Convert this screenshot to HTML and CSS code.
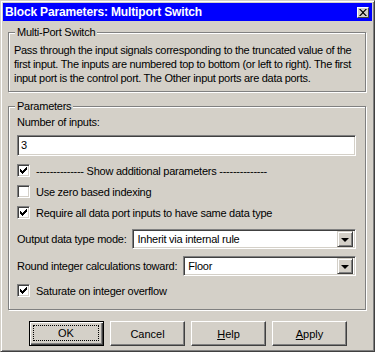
FILE: index.html
```html
<!DOCTYPE html>
<html lang="en">
<head>
    <title>Block Parameters: Multiport Switch</title>
    <link rel="stylesheet" href="styles.css">
</head>
<body>

    <div class="window">
        <!-- Title bar -->
        <div class="titlebar">
            <span class="title">Block Parameters: Multiport Switch</span>
            <span class="close-btn">
                <svg width="8" height="7" viewBox="0 0 8 7">
                    <path d="M0 0h1.5L4 2.5 6.5 0H8L4.75 3.5 8 7H6.5L4 4.5 1.5 7H0l3.25-3.5z" fill="#000"/>
                </svg>
            </span>
        </div>

        <div class="content">
            <fieldset class="group group-desc">
                <legend>Multi-Port Switch</legend>
                <p class="desc">Pass through the input signals corresponding to the truncated value of the<br>first input. The inputs are numbered top to bottom (or left to right). The first<br>input port is the control port. The Other input ports are data ports.</p>
            </fieldset>

            <fieldset class="group group-params">
                <legend>Parameters</legend>
                <div class="field-label">Number of inputs:</div>
                <div class="textbox">3</div>

                <div class="check-row"><span class="checkbox checked"></span>-------------- Show additional parameters --------------</div>
                <div class="check-row"><span class="checkbox"></span>Use zero based indexing</div>
                <div class="check-row"><span class="checkbox checked"></span>Require all data port inputs to have same data type</div>

                <div class="select-row first">
                    <span class="select-label">Output data type mode:</span>
                    <div class="select"><span class="select-value">Inherit via internal rule</span><span class="select-arrow"></span></div>
                </div>
                <div class="select-row">
                    <span class="select-label">Round integer calculations toward:</span>
                    <div class="select"><span class="select-value">Floor</span><span class="select-arrow"></span></div>
                </div>

                <div class="check-row"><span class="checkbox checked"></span>Saturate on integer overflow</div>
            </fieldset>

            <div class="buttons">
                <button class="btn btn-default"><span class="focus">OK</span></button>
                <button class="btn">Cancel</button>
                <button class="btn"><u>H</u>elp</button>
                <button class="btn"><u>A</u>pply</button>
            </div>
        </div>
    </div>

</body>
</html>
```

FILE: styles.css
```css
* {
    box-sizing: border-box;
}

body {
    margin: 0;
    background: #d4d0c8;
    font-family: 'Liberation Sans', Arial, sans-serif;
    font-size: 11px;
    letter-spacing: -0.25px;
    color: #000;
}

/* Window frame */
.window {
    width: 375px;
    height: 352px;
    background: #d4d0c8;
    border: 1px solid;
    border-color: #d4d0c8 #404040 #404040 #d4d0c8;
    box-shadow: inset 1px 1px 0 #fff, inset -1px -1px 0 #808080;
    padding: 2px;
}

.titlebar {
    height: 18px;
    background: #0000ff;
    display: flex;
    align-items: center;
    justify-content: space-between;
    padding: 0 3px 0 2px;
}

.title {
    color: #fff;
    font-weight: bold;
    font-size: 12px;
    letter-spacing: -0.15px;
}

.close-btn {
    width: 12px;
    height: 11px;
    background: #d4d0c8;
    border: 1px solid;
    border-color: #fff #404040 #404040 #fff;
    display: flex;
    align-items: center;
    justify-content: center;
}

.content {
    padding: 4px 4px 0 5px;
}

/* Group boxes */
.group {
    margin: 0;
    border: 1px solid #808080;
    box-shadow: 1px 1px 0 #fff, inset 1px 1px 0 #fff;
    padding: 0 5px;
    width: 358px;
}

.group legend {
    padding: 0 2px;
    margin-left: 1px;
    line-height: 14px;
    background: #d4d0c8;
}

.desc {
    margin: 4px 0 6px 0;
    line-height: 14px;
    letter-spacing: -0.3px;
    white-space: nowrap;
}

.group-params {
    margin-top: 7px;
    padding: 0 9px 0 8px;
    height: 211px;
}

.group-params legend {
    margin-left: -2px;
}

.field-label {
    line-height: 14px;
    margin-top: 2px;
}

/* Sunken controls */
.textbox,
.select,
.checkbox {
    background: #fff;
    border: 1px solid;
    border-color: #808080 #fff #fff #808080;
    box-shadow: inset 1px 1px 0 #404040, inset -1px -1px 0 #d4d0c8;
}

.textbox {
    margin-top: 6px;
    height: 21px;
    width: 339px;
    padding: 2px 3px;
    line-height: 15px;
}

.check-row {
    display: flex;
    align-items: center;
    height: 13px;
    margin-top: 8px;
    white-space: nowrap;
}

.checkbox {
    width: 13px;
    height: 13px;
    margin-right: 6px;
    flex: none;
    position: relative;
}

.checkbox.checked::after {
    content: "";
    position: absolute;
    left: 2px;
    top: 2px;
    width: 7px;
    height: 7px;
    background: no-repeat center / 7px 7px url("data:image/svg+xml,%3Csvg xmlns='http://www.w3.org/2000/svg' width='7' height='7' viewBox='0 0 7 7'%3E%3Cpath d='M0 2h1v1h1v1h1V3h1V2h1V1h1V0h1v3H6v1H5v1H4v1H3v1H2V6H1V5H0z' fill='%23000'/%3E%3C/svg%3E");
}

.select-row {
    display: flex;
    align-items: center;
    margin-top: 7px;
    white-space: nowrap;
}

.select-row.first {
    margin-top: 10px;
}

.select-row + .check-row {
    margin-top: 8px;
}

.select-label {
    margin-right: 6px;
}

.select {
    flex: 1;
    height: 20px;
    display: flex;
    align-items: center;
    padding: 2px;
}

.select-value {
    flex: 1;
    padding-left: 2px;
}

.select-arrow {
    width: 16px;
    height: 16px;
    background: #d4d0c8;
    border: 1px solid;
    border-color: #d4d0c8 #404040 #404040 #d4d0c8;
    box-shadow: inset 1px 1px 0 #fff, inset -1px -1px 0 #808080;
    display: flex;
    align-items: center;
    justify-content: center;
}

.select-arrow::before {
    content: "";
    border-left: 4px solid transparent;
    border-right: 4px solid transparent;
    border-top: 4px solid #000;
    margin-top: 1px;
}

/* Buttons */
.buttons {
    display: flex;
    gap: 6px;
    padding-left: 21px;
    margin-top: 11px;
}

.btn {
    width: 75px;
    height: 25px;
    font-family: inherit;
    font-size: 11px;
    letter-spacing: 0;
    color: #000;
    background: #d4d0c8;
    border: 1px solid;
    border-color: #fff #404040 #404040 #fff;
    box-shadow: inset -1px -1px 0 #808080;
    padding: 0;
}

.btn-default {
    border: 1px solid #000;
    box-shadow: inset 1px 1px 0 #fff, inset -1px -1px 0 #404040, inset -2px -2px 0 #808080;
    padding: 3px 4px 4px 3px;
}

.focus {
    display: flex;
    align-items: center;
    justify-content: center;
    height: 100%;
    border: 1px dotted #000;
}
```
